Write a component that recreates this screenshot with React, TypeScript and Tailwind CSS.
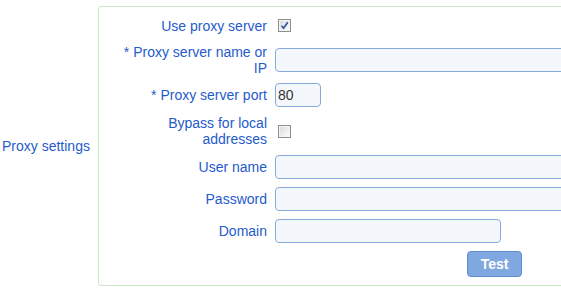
import * as React from "react"

const labelCls = "ml-[18px] w-[150px] shrink-0 text-right leading-[16px] text-[#1f5bcc]"

function Check({ checked }: { checked?: boolean }) {
  return (
    <span className="ml-[11px] flex h-[13px] w-[13px] items-center justify-center border border-[#8e8f8f] bg-white">
      <span className="relative flex h-[11px] w-[11px] items-center justify-center border border-[#f4f4f4] bg-gradient-to-br from-[#dcdcdc] to-[#fbfbfb]">
        {checked && (
          <svg width="9" height="9" viewBox="0 0 9 9" className="absolute">
            <path d="M1.5 4.8 L3.6 7.2 L7.8 1.2" fill="none" stroke="#2c4f9e" strokeWidth="1.6" />
          </svg>
        )}
      </span>
    </span>
  )
}

function Field({ width, value }: { width: string; value?: string }) {
  return (
    <input
      type="text"
      defaultValue={value}
      className={`ml-[8px] h-[24px] ${width} rounded-[4px] border border-[#86a9dc] bg-[#f4f8fc] px-[2px] text-[14px] text-[#333] outline-none`}
    />
  )
}

export default function App() {
  return (
    <div className="h-[291px] w-[561px] overflow-hidden bg-white font-['Liberation_Sans',Arial,sans-serif] text-[14px]">
      <div className="flex w-[700px] items-center pt-[6px]">
        <div className="w-[98px] shrink-0 pl-[2px] leading-[16px] text-[#1f5bcc]">Proxy settings</div>
        <div className="flex w-[560px] flex-col rounded-[3px] border border-[#c9e8c3] pt-[1px] pb-[4px]">
          <div className="flex h-[35px] items-center">
            <div className={labelCls}>Use proxy server</div>
            <Check checked />
          </div>
          <div className="flex h-[34px] items-center">
            <div className={labelCls}>* Proxy server name or IP</div>
            <Field width="w-[310px]" />
          </div>
          <div className="flex h-[36px] items-center">
            <div className={labelCls}>* Proxy server port</div>
            <Field width="w-[46px]" value="80" />
          </div>
          <div className="flex h-[36px] items-center">
            <div className={labelCls}>Bypass for local addresses</div>
            <Check />
          </div>
          <div className="flex h-[35px] items-center">
            <div className={labelCls}>User name</div>
            <Field width="w-[310px]" />
          </div>
          <div className="flex h-[30px] items-center">
            <div className={labelCls}>Password</div>
            <Field width="w-[310px]" />
          </div>
          <div className="flex h-[33px] items-center">
            <div className={labelCls}>Domain</div>
            <Field width="w-[226px]" />
          </div>
          <div className="flex h-[34px] items-center">
            <button
              type="button"
              className="ml-[368px] h-[26px] w-[55px] rounded-[4px] border border-[#5f8bd0] bg-[#7fa8e0] text-[14px] font-bold text-white"
            >
              Test
            </button>
          </div>
        </div>
      </div>
    </div>
  )
}
